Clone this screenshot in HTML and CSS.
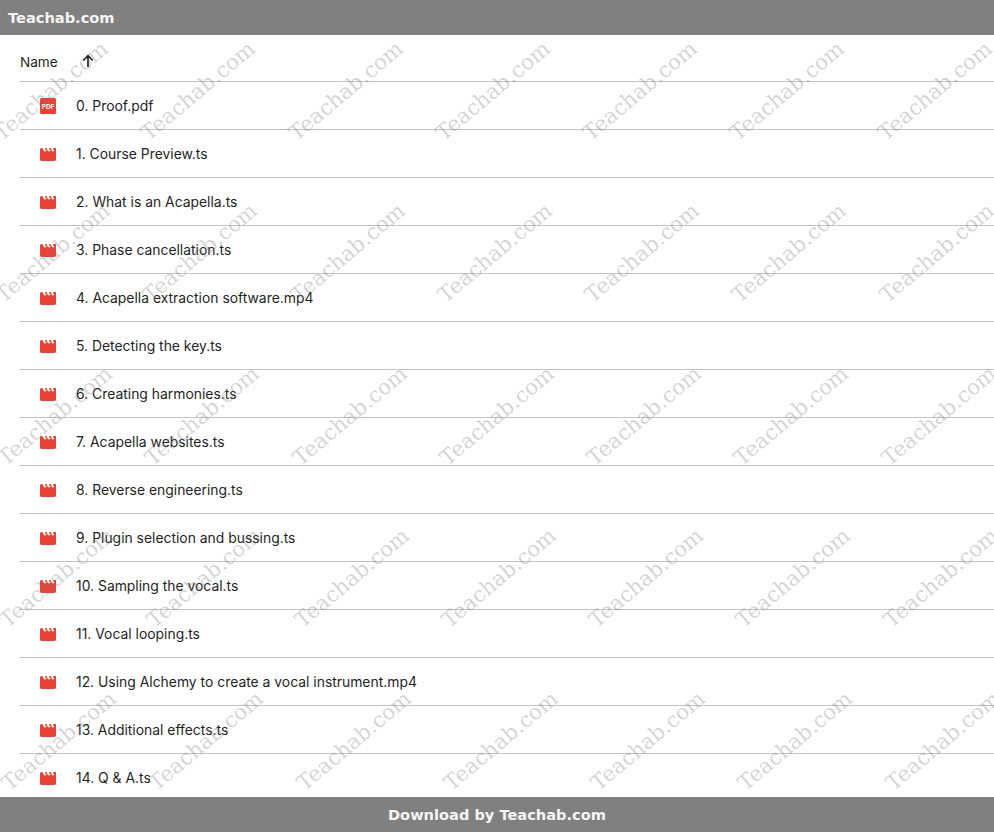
FILE: index.html
```html
<!DOCTYPE html>
<html lang="en">
<head>
<meta charset="utf-8">
<title>Teachab.com</title>
<link rel="stylesheet" href="styles.css">
</head>
<body>
<svg class="defs" width="0" height="0" aria-hidden="true">
  <symbol id="film" viewBox="2 4 20 16">
    <path d="M18 4l2 4h-3l-2-4h-2l2 4h-3l-2-4H8l2 4H7L5 4H4c-1.100 0-2 .9-2 2v12c0 1.100.9 2 2 2h16c1.100 0 2-.9 2-2V4h-4z" fill="#ea4335"/>
  </symbol>
</svg>
<header class="topbar">Teachab.com</header>
<main class="content">
  <div class="head-row">
    <span class="head-name">Name</span>
    <svg class="arrow" width="16" height="16" viewBox="0 0 16 16"><path d="M8 14V3M3.200 7.500 8 2.700l4.800 4.800" fill="none" stroke="#1f1f1f" stroke-width="1.700"/></svg>
  </div>
  <ul class="list">
    <li class="row"><svg class="pdf" width="16" height="16" viewBox="0 0 16 16"><rect width="16" height="16" rx="1.500" fill="#ea4335"/><text x="8" y="10.500" textLength="12.500" lengthAdjust="spacingAndGlyphs" class="pdf-label">PDF</text></svg><span class="name">0. Proof.pdf</span></li>
    <li class="row"><svg class="film" width="16" height="13"><use href="#film"/></svg><span class="name">1. Course Preview.ts</span></li>
    <li class="row"><svg class="film" width="16" height="13"><use href="#film"/></svg><span class="name">2. What is an Acapella.ts</span></li>
    <li class="row"><svg class="film" width="16" height="13"><use href="#film"/></svg><span class="name">3. Phase cancellation.ts</span></li>
    <li class="row"><svg class="film" width="16" height="13"><use href="#film"/></svg><span class="name">4. Acapella extraction software.mp4</span></li>
    <li class="row"><svg class="film" width="16" height="13"><use href="#film"/></svg><span class="name">5. Detecting the key.ts</span></li>
    <li class="row"><svg class="film" width="16" height="13"><use href="#film"/></svg><span class="name">6. Creating harmonies.ts</span></li>
    <li class="row"><svg class="film" width="16" height="13"><use href="#film"/></svg><span class="name">7. Acapella websites.ts</span></li>
    <li class="row"><svg class="film" width="16" height="13"><use href="#film"/></svg><span class="name">8. Reverse engineering.ts</span></li>
    <li class="row"><svg class="film" width="16" height="13"><use href="#film"/></svg><span class="name">9. Plugin selection and bussing.ts</span></li>
    <li class="row"><svg class="film" width="16" height="13"><use href="#film"/></svg><span class="name">10. Sampling the vocal.ts</span></li>
    <li class="row"><svg class="film" width="16" height="13"><use href="#film"/></svg><span class="name">11. Vocal looping.ts</span></li>
    <li class="row"><svg class="film" width="16" height="13"><use href="#film"/></svg><span class="name">12. Using Alchemy to create a vocal instrument.mp4</span></li>
    <li class="row"><svg class="film" width="16" height="13"><use href="#film"/></svg><span class="name">13. Additional effects.ts</span></li>
    <li class="row"><svg class="film" width="16" height="13"><use href="#film"/></svg><span class="name">14. Q &amp; A.ts</span></li>
  </ul>
</main>
<footer class="bottombar">Download by Teachab.com</footer>
<div class="watermarks" aria-hidden="true">
  <div class="wm-row wm-r1"><span>Teachab.com</span><span>Teachab.com</span><span>Teachab.com</span><span>Teachab.com</span><span>Teachab.com</span><span>Teachab.com</span><span>Teachab.com</span></div>
  <div class="wm-row wm-r2"><span>Teachab.com</span><span>Teachab.com</span><span>Teachab.com</span><span>Teachab.com</span><span>Teachab.com</span><span>Teachab.com</span><span>Teachab.com</span></div>
  <div class="wm-row wm-r3"><span>Teachab.com</span><span>Teachab.com</span><span>Teachab.com</span><span>Teachab.com</span><span>Teachab.com</span><span>Teachab.com</span><span>Teachab.com</span></div>
  <div class="wm-row wm-r4"><span>Teachab.com</span><span>Teachab.com</span><span>Teachab.com</span><span>Teachab.com</span><span>Teachab.com</span><span>Teachab.com</span><span>Teachab.com</span></div>
  <div class="wm-row wm-r5"><span>Teachab.com</span><span>Teachab.com</span><span>Teachab.com</span><span>Teachab.com</span><span>Teachab.com</span><span>Teachab.com</span><span>Teachab.com</span></div>
</div>
</body>
</html>
```

FILE: styles.css
```css
* { box-sizing: border-box; }
html, body { margin: 0; height: 100%; }
body {
  display: flex;
  flex-direction: column;
  height: 832px;
  overflow: hidden;
  position: relative;
  background: #fff;
  font-family: Inter, "Liberation Sans", sans-serif;
  color: #1f1f1f;
}
.defs { position: absolute; }
.topbar, .bottombar {
  flex: none;
  height: 35px;
  background: #808080;
  color: #f5f5f5;
  font-family: "DejaVu Sans", sans-serif;
  font-weight: 700;
  font-size: 14.600px;
  line-height: 35px;
}
.topbar { padding-left: 8px; }
.bottombar { text-align: center; position: relative; z-index: 3; }
.content { flex: 1; min-height: 0; overflow: hidden; padding-left: 20px; }
.head-row {
  display: flex;
  align-items: center;
  height: 47px;
  border-bottom: 1px solid #c4c4c4;
  font-size: 13.600px;
  padding-top: 8px;
}
.arrow { margin-left: 22px; margin-top: -2px; }
.list { list-style: none; margin: 0; padding: 0; }
.row {
  display: flex;
  align-items: center;
  height: 48px;
  border-bottom: 1px solid #c4c4c4;
  font-size: 13.900px;
  padding-left: 20px;
}
.pdf, .film { flex: none; }
.film { margin-top: 1px; }
.name { margin-left: 20px; }
.pdf-label {
  font-family: "Liberation Sans", sans-serif;
  font-weight: 700;
  font-size: 7px;
  fill: #fff;
  text-anchor: middle;
}
.watermarks {
  position: absolute;
  left: 0;
  top: 0;
  width: 994px;
  height: 832px;
  overflow: hidden;
  pointer-events: none;
  z-index: 2;
}
.wm-row {
  display: flex;
  height: 162.500px;
  align-items: center;
  justify-content: flex-start;
}
.wm-row span {
  flex: none;
  width: 147.300px;
  text-align: center;
  white-space: nowrap;
  font-family: "DejaVu Serif", serif;
  font-size: 21.200px;
  color: rgba(120, 120, 120, 0.32);
  transform: rotate(-40deg);
}
.wm-r1 { margin: 9px 0 0 -23px; }
.wm-r2 { margin-left: -21px; }
.wm-r3 { margin-left: -19px; }
.wm-r4 { margin-left: -17px; }
.wm-r5 { margin-left: -15px; }
```
